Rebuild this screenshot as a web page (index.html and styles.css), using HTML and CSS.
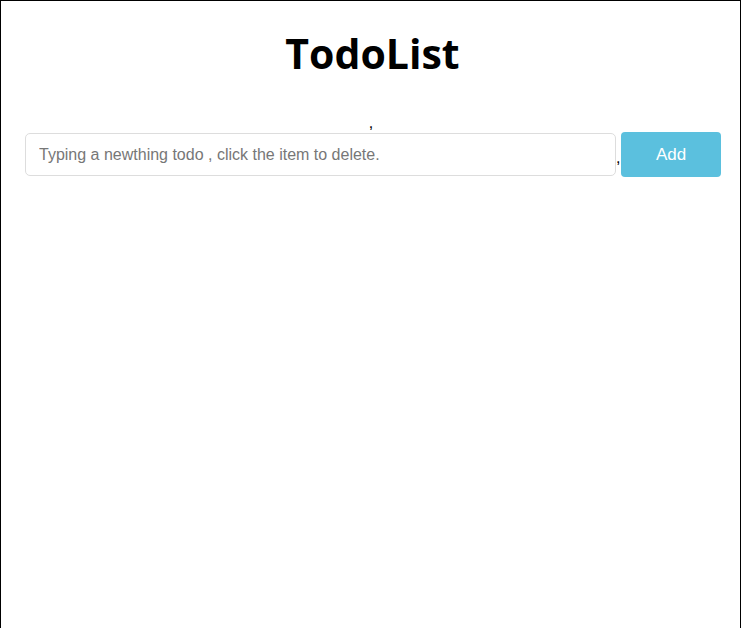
FILE: index.html
```html
<!DOCTYPE html>
<html>
<head>
<meta charset="utf-8">
<link rel="stylesheet" href="styles.css">
</head>
<body>
<div class="app">
  <h1 class="title">TodoList</h1>
  <div class="sep">,</div>
  <div class="row">
    <input class="todo-input" type="text" placeholder="Typing a newthing todo , click the item to delete.">
    <span class="comma">,</span>
    <button class="add-btn">Add</button>
  </div>
</div>
</body>
</html>
```
FILE: styles.css
```css
html, body {
  margin: 0;
  padding: 0;
  background: #fff;
}
.app {
  box-sizing: border-box;
  width: 741px;
  height: 640px;
  border: 1px solid #000;
  font-family: "Liberation Sans", Arial, sans-serif;
}
.title {
  margin: 0;
  padding-top: 24px;
  padding-left: 4px;
  height: 56px;
  line-height: 56px;
  text-align: center;
  font-family: "Open Sans", "Noto Sans", sans-serif;
  font-weight: 700;
  font-size: 41px;
  letter-spacing: 0;
}
.sep {
  margin-top: 33px;
  height: 18px;
  line-height: 18px;
  text-align: center;
  font-size: 16px;
  padding-left: 1px;
}
.row {
  display: flex;
  align-items: center;
  padding-left: 24px;
  margin-top: 0;
}
.todo-input {
  box-sizing: border-box;
  width: 591px;
  height: 43px;
  padding: 0 13px;
  border: 1px solid #ddd;
  border-radius: 5px;
  font-family: "Liberation Sans", Arial, sans-serif;
  font-size: 16px;
  color: #333;
  outline: none;
}
.todo-input::placeholder {
  color: #777;
}
.comma {
  font-size: 16px;
  width: 5px;
  padding-top: 6px;
}
.add-btn {
  box-sizing: border-box;
  width: 100px;
  height: 45px;
  border: none;
  border-radius: 4px;
  background: #5bc0de;
  color: #fff;
  font-family: "Liberation Sans", Arial, sans-serif;
  font-size: 17px;
}
```
